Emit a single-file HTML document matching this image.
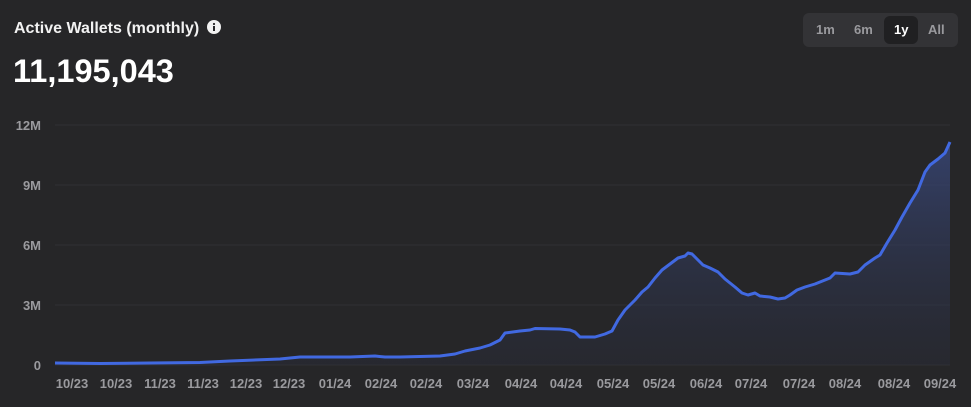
<!DOCTYPE html>
<html><head><style>
body{margin:0;background:#262628;width:971px;height:407px;overflow:hidden;font-family:"Liberation Sans",sans-serif;}
.t{position:absolute;left:14px;top:20px;color:#f2f2f2;font-size:16px;font-weight:bold;}
.v{position:absolute;left:13px;top:53px;color:#fff;font-size:32.5px;font-weight:bold;}
.seg{position:absolute;left:803px;top:13px;width:155px;height:34px;background:#333336;border-radius:6px;}
.seg span{position:absolute;top:9px;font-size:13px;font-weight:bold;color:#9a9a9e}
.sel{position:absolute;left:81px;top:3px;width:34px;height:28px;background:#202022;border-radius:6px}
</style></head><body>
<div class="t">Active Wallets (monthly) <svg width="14" height="14" viewBox="0 0 14 14" style="vertical-align:-1px;margin-left:3px"><circle cx="7" cy="7" r="7" fill="#f2f2f2"/><rect x="6" y="6" width="2" height="5" fill="#262628"/><circle cx="7" cy="4" r="1.1" fill="#262628"/></svg></div>
<div class="v">11,195,043</div>
<div class="seg"><div class="sel"></div><span style="left:13px">1m</span><span style="left:51px">6m</span><span style="left:91px;color:#fff">1y</span><span style="left:125px">All</span></div>
<svg width="971" height="407" style="position:absolute;left:0;top:0" font-family="Liberation Sans" font-weight="bold" font-size="13" fill="#9a9a9e">
<defs><linearGradient id="g" x1="0" y1="0" x2="0" y2="1"><stop offset="0" stop-color="#3a4a80" stop-opacity=".75"/><stop offset="1" stop-color="#2a2e40" stop-opacity=".3"/></linearGradient></defs>
<g stroke="#303033" stroke-width="1"><line x1="55" y1="125" x2="950" y2="125"/><line x1="55" y1="185" x2="950" y2="185"/><line x1="55" y1="245" x2="950" y2="245"/><line x1="55" y1="305" x2="950" y2="305"/><line x1="55" y1="365" x2="950" y2="365"/></g>
<g text-anchor="end"><text x="41" y="130">12M</text><text x="41" y="190">9M</text><text x="41" y="250">6M</text><text x="41" y="310">3M</text><text x="41" y="370">0</text></g>
<path d="M55,363 L100,363.5 150,363 200,362.5 230,361 280,359 300,357 350,357 375,356 385,357 400,357 440,356 455,354 465,351 480,348 490,345 500,340 505,333 520,331 530,330 535,328.5 560,329 570,330 575,332 580,337 595,337 605,334 612,331 618,320 625,310 630,305 635,300 642,292 648,287 655,278 662,270 670,264 678,258 685,256 688,253 692,254 698,260 703,265 710,268 718,272 725,279 735,287 742,293 748,295 755,293 760,296 770,297 778,299 785,298 790,295 797,290 805,287 815,284 825,280 830,278 835,273 850,274 858,272 865,265 875,258 880,255 887,243 895,230 902,217 910,203 918,190 925,172 930,165 938,159 945,153 950,142 L950,365 L55,365Z" fill="url(#g)"/>
<path d="M55,363 L100,363.5 150,363 200,362.5 230,361 280,359 300,357 350,357 375,356 385,357 400,357 440,356 455,354 465,351 480,348 490,345 500,340 505,333 520,331 530,330 535,328.5 560,329 570,330 575,332 580,337 595,337 605,334 612,331 618,320 625,310 630,305 635,300 642,292 648,287 655,278 662,270 670,264 678,258 685,256 688,253 692,254 698,260 703,265 710,268 718,272 725,279 735,287 742,293 748,295 755,293 760,296 770,297 778,299 785,298 790,295 797,290 805,287 815,284 825,280 830,278 835,273 850,274 858,272 865,265 875,258 880,255 887,243 895,230 902,217 910,203 918,190 925,172 930,165 938,159 945,153 950,142" fill="none" stroke="#4169e1" stroke-width="3" stroke-linejoin="round"/>
<g text-anchor="middle"><text x="72" y="388">10/23</text><text x="116" y="388">10/23</text><text x="160" y="388">11/23</text><text x="203" y="388">11/23</text><text x="246" y="388">12/23</text><text x="289" y="388">12/23</text><text x="335" y="388">01/24</text><text x="381" y="388">02/24</text><text x="426" y="388">02/24</text><text x="473" y="388">03/24</text><text x="521" y="388">04/24</text><text x="566" y="388">04/24</text><text x="613" y="388">05/24</text><text x="659" y="388">05/24</text><text x="706" y="388">06/24</text><text x="751" y="388">07/24</text><text x="799" y="388">07/24</text><text x="845" y="388">08/24</text><text x="894" y="388">08/24</text><text x="940" y="388">09/24</text></g>
</svg>
</body></html>
